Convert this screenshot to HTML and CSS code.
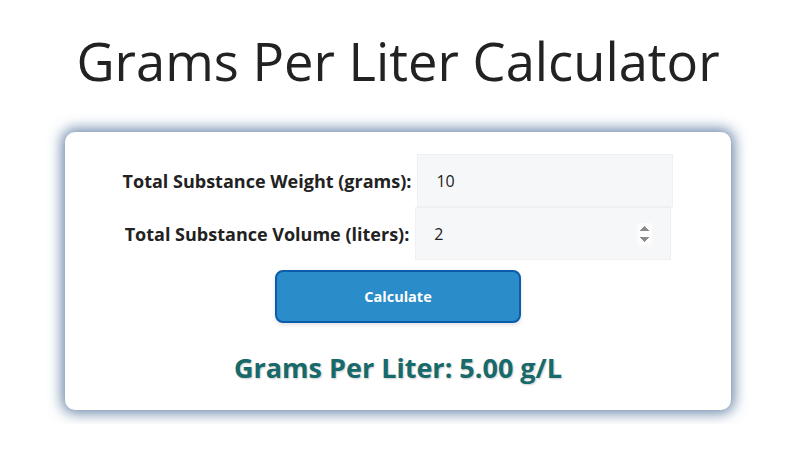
FILE: index.html
```html
<!DOCTYPE html>
<html lang="en">
<head>
    <meta charset="UTF-8">
    <meta name="viewport" content="width=device-width, initial-scale=1.0">
    <title>Grams Per Liter Calculator</title>
    <link rel="stylesheet" href="styles.css">
</head>
<body>

<h1>Grams Per Liter Calculator</h1>

<div class="calculator">
    <div class="form-row">
        <label for="weight">Total Substance Weight (grams):</label>
        <input type="text" id="weight" value="10">
    </div>
    <div class="form-row">
        <label for="volume">Total Substance Volume (liters):</label>
        <input type="number" id="volume" value="2">
    </div>
    <button class="calc-btn">Calculate</button>
    <div class="result">Grams Per Liter: 5.00 g/L</div>
</div>

</body>
</html>
```

FILE: styles.css
```css
/* Общие стили */
* {
    box-sizing: border-box;
}

body {
    margin: 0;
    padding: 25px 20px 14px 26px;
    font-family: 'Segoe UI', 'Open Sans', sans-serif;
    background-color: #fff;
    color: #222;
}

h1 {
    font-size: 52.5px;
    font-weight: 400;
    text-align: center;
    margin: 0 0 36px;
    color: #222;
}

.calculator {
    width: 666px;
    margin: 0 auto;
    background-color: #fff;
    border-radius: 10px;
    padding: 22px 20px 24px;
    box-shadow: 0 0 14px 3px rgba(40, 80, 130, 0.7);
    text-align: center;
}

.form-row {
    display: flex;
    justify-content: center;
    align-items: center;
    gap: 6px;
}

.form-row label {
    font-size: 18px;
    font-weight: bold;
    color: #222;
}

.form-row input {
    width: 256px;
    height: 53px;
    padding: 0 18px;
    font-family: inherit;
    font-size: 16px;
    color: #222;
    background-color: #f6f7f9;
    border: 1px solid #eef0f2;
    outline: none;
}

.form-row input::-webkit-inner-spin-button {
    opacity: 1;
}

.calc-btn {
    display: block;
    width: 246px;
    height: 53px;
    margin: 10px auto 0;
    background-color: #2a8cc8;
    color: #fff;
    font-family: inherit;
    font-size: 14.5px;
    font-weight: bold;
    border: 2px solid #0b5cad;
    border-radius: 8px;
    box-shadow: 0 2px 4px rgba(0, 0, 0, 0.12);
    cursor: pointer;
}

.result {
    margin-top: 26px;
    font-size: 27px;
    font-weight: bold;
    color: #17696a;
    text-shadow: 1px 1px 2px rgba(0, 0, 0, 0.2);
}
```
